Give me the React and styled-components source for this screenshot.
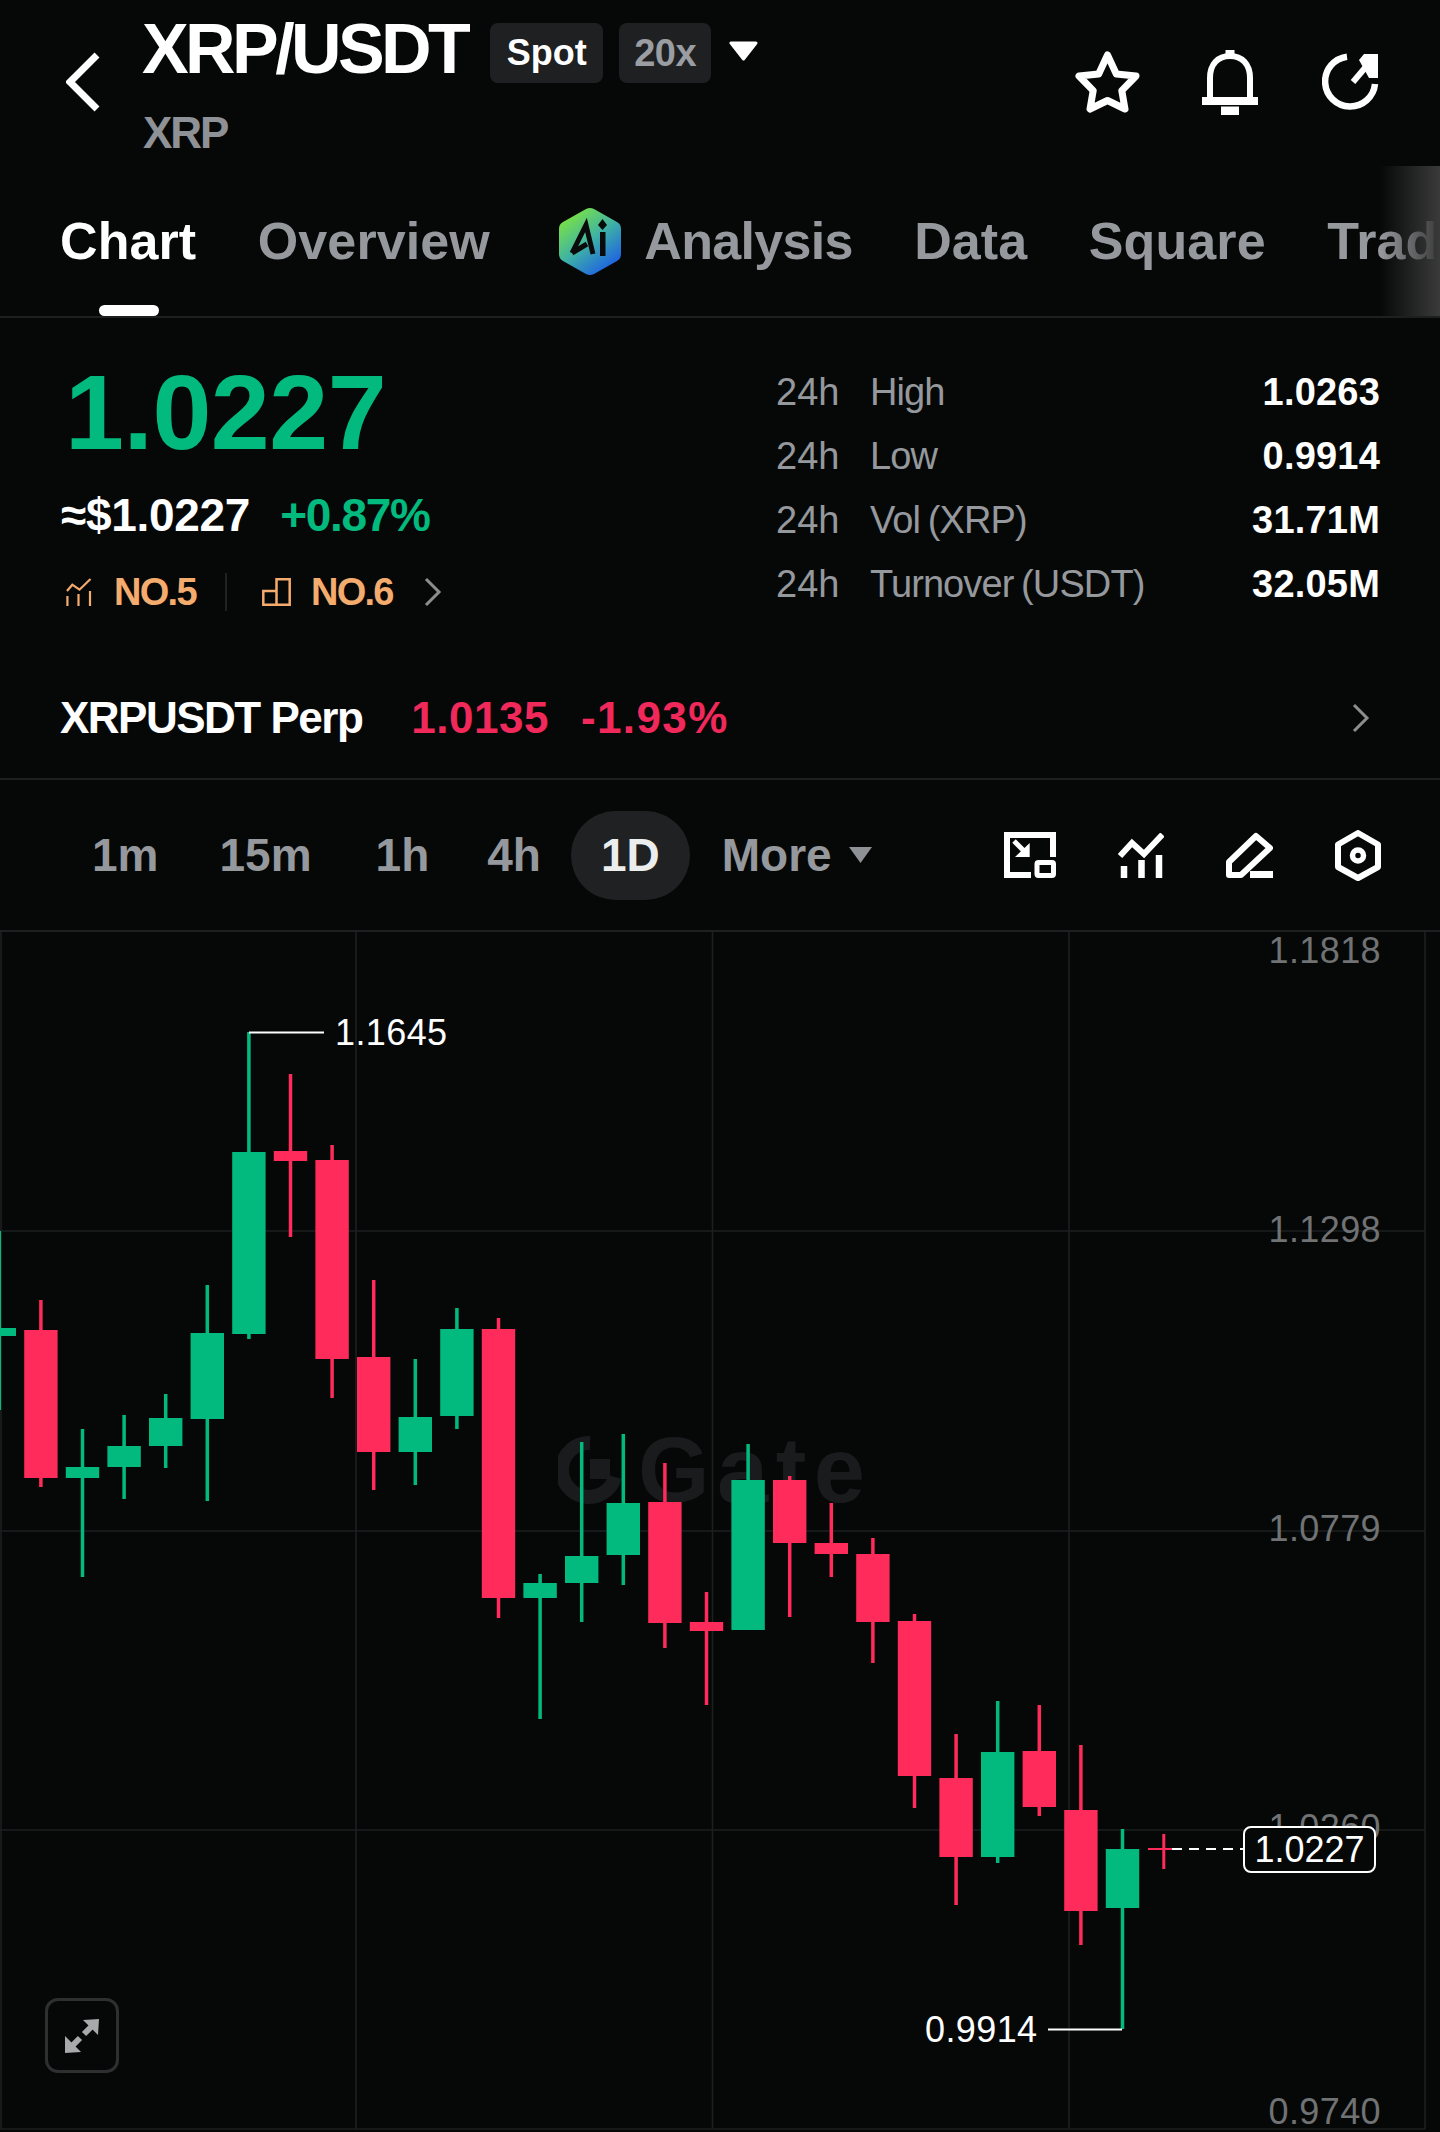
import React from 'react'
import styled, { createGlobalStyle } from 'styled-components'

const GREEN = '#02ba7e'
const RED = '#fe2b5b'
const GREY = '#95989c'
const LINE = '#1d1f20'
const BG = '#060808'

const GlobalStyle = createGlobalStyle`
  html, body {
    margin: 0;
    padding: 0;
    background: ${BG};
  }
  * {
    box-sizing: border-box;
  }
`

const Page = styled.div`
  width: 1440px;
  height: 2132px;
  overflow: hidden;
  background: ${BG};
  color: #fff;
  font-family: "Liberation Sans", Arial, sans-serif;
`

/* header */
const Header = styled.header`
  height: 166px;
  display: flex;
  align-items: flex-start;
  padding: 23px 60px 0 66px;
`

const BackIcon = styled.svg`
  width: 34px;
  height: 60px;
  margin-top: 29px;
  margin-right: 43px;
  flex: none;
`

const TitleBlock = styled.div`
  display: flex;
  flex-direction: column;
`

const TitleRow = styled.div`
  display: flex;
  align-items: flex-start;
  height: 60px;
`

const Title = styled.h1`
  margin: 0 23px 0 -1px;
  font-size: 70px;
  line-height: 52px;
  font-weight: 700;
  letter-spacing: -3.6px;
  white-space: nowrap;
`

const Tag = styled.span`
  height: 60px;
  padding: 0 ${({ $muted }) => ($muted ? '15px' : '16.5px')};
  margin-right: 16px;
  display: flex;
  align-items: center;
  border-radius: 8px;
  background: #1e2021;
  color: ${({ $muted }) => ($muted ? '#9a9da1' : '#fff')};
  font-size: ${({ $muted }) => ($muted ? '38px' : '36px')};
  font-weight: 700;
  letter-spacing: ${({ $muted }) => ($muted ? '-0.5px' : '0')};
`

const TagCaret = styled.svg`
  width: 29px;
  height: 20px;
  margin-top: 18px;
  margin-left: 2px;
`

const Subtitle = styled.div`
  margin-top: 28px;
  font-size: 44px;
  line-height: 44px;
  font-weight: 700;
  letter-spacing: -2px;
  color: #8e9195;
`

const HeaderActions = styled.div`
  margin-left: auto;
  margin-top: 26px;
  height: 66px;
  display: flex;
  align-items: center;
  gap: 62px;
`

const ShareIcon = styled.svg`
  width: 58px;
  height: 58px;
  margin-left: 2px;
`

/* tabs */
const Tabs = styled.nav`
  position: relative;
  height: 152px;
  display: flex;
  align-items: flex-start;
  gap: 61.5px;
  padding: 0 0 0 60px;
  overflow: hidden;
  border-bottom: 2px solid ${LINE};
`

const Tab = styled.div`
  position: relative;
  flex: none;
  height: 150px;
  display: flex;
  align-items: center;
  font-size: 52px;
  font-weight: 700;
  letter-spacing: ${({ $tight }) => ($tight ? '-0.7px' : '0.1px')};
  color: ${({ $active }) => ($active ? '#fff' : GREY)};

  &::after {
    content: ${({ $active }) => ($active ? '""' : 'none')};
    position: absolute;
    left: 39px;
    bottom: 0;
    width: 60px;
    height: 11px;
    border-radius: 6px;
    background: #fff;
  }
`

const AiIcon = styled.svg`
  width: 62px;
  height: 69px;
  margin: 0 23px 0 8px;
`

const TabsFade = styled.div`
  position: absolute;
  top: 0;
  right: 0;
  width: 60px;
  height: 150px;
  background: linear-gradient(90deg, rgba(60, 60, 60, 0), #3a3a3a);
`

/* summary */
const Summary = styled.section`
  height: 340px;
  display: flex;
  padding: 0 60px;
`

const PriceColumn = styled.div`
  flex: 1;
  display: flex;
  flex-direction: column;
`

const BigPrice = styled.div`
  margin-top: 44px;
  margin-left: 5px;
  font-size: 106px;
  line-height: 100px;
  font-weight: 700;
  letter-spacing: -0.5px;
  color: ${GREEN};
`

const SubRow = styled.div`
  margin-top: 28px;
  height: 50px;
  display: flex;
  align-items: center;
  gap: 30px;
  font-size: 46px;
  font-weight: 700;
`

const FiatPrice = styled.span`
  letter-spacing: -0.3px;
  margin-left: 1px;
`

const Change = styled.span`
  letter-spacing: -1.3px;
  color: ${GREEN};
`

const RankRow = styled.div`
  margin-top: 32px;
  height: 40px;
  display: flex;
  align-items: center;
  padding-left: 5px;
`

const RankIcon = styled.svg`
  width: ${({ $w }) => $w}px;
  height: 28px;
  margin-right: ${({ $mr }) => $mr}px;
`

const RankText = styled.span`
  font-size: 38px;
  font-weight: 700;
  letter-spacing: -1.7px;
  color: #f4ab6e;
`

const RankDivider = styled.span`
  width: 2px;
  height: 38px;
  margin: 0 35px 0 29px;
  background: #1f2122;
`

const Chevron = styled.svg`
  width: 18px;
  height: 30px;
  margin-left: ${({ $ml }) => $ml || 0}px;
`

const Stats = styled.div`
  width: 604px;
  padding-top: 42px;
`

const StatRow = styled.div`
  height: 64px;
  display: flex;
  align-items: center;
  font-size: 38px;
`

const StatPeriod = styled.span`
  width: 94px;
  color: ${GREY};
`

const StatLabel = styled.span`
  color: ${GREY};
  letter-spacing: -0.9px;
  word-spacing: -2px;
`

const StatValue = styled.span`
  margin-left: auto;
  font-weight: 700;
  letter-spacing: 0.2px;
`

/* perp row */
const PerpRow = styled.section`
  height: 122px;
  display: flex;
  align-items: center;
  padding: 0 70px 0 60px;
  border-bottom: 2px solid ${LINE};
  font-size: 44px;
  font-weight: 700;
`

const PerpName = styled.span`
  letter-spacing: -1.5px;
  margin-right: 49px;
`

const PerpNumber = styled.span`
  color: #f0295a;
  margin-right: 32px;
  letter-spacing: ${({ $wide }) => ($wide ? '1.4px' : '0.5px')};
`

const PerpArrow = styled.span`
  margin-left: auto;
  display: flex;
`

/* timeframes */
const ToolRow = styled.section`
  height: 152px;
  display: flex;
  align-items: center;
  padding: 0 59px 0 62px;
  border-bottom: 2px solid ${LINE};
`

const Interval = styled.span`
  height: 89px;
  padding: 0 30px;
  display: flex;
  align-items: center;
  border-radius: 45px;
  font-size: 46px;
  font-weight: 700;
  margin-left: ${({ $ml }) => $ml || 0}px;
  margin-right: ${({ $active }) => ($active ? '2px' : '0')};
  background: ${({ $active }) => ($active ? '#1f2122' : 'transparent')};
  color: ${({ $active }) => ($active ? '#eceded' : GREY)};
`

const MoreCaret = styled.svg`
  width: 23px;
  height: 16px;
  margin-left: 17px;
`

const ToolIcons = styled.div`
  margin-left: auto;
  display: flex;
  align-items: center;
  gap: 62px;
`

/* chart */
const ChartArea = styled.section`
  position: relative;
  height: 1200px;
  overflow: hidden;
`

const Watermark = styled.div`
  position: absolute;
  left: 558px;
  top: 503px;
  display: flex;
  align-items: center;
  gap: 16px;
  color: #191b1c;
  font-size: 92px;
  line-height: 70px;
  font-weight: 700;
  letter-spacing: 7.5px;
`

const ChartSvg = styled.svg`
  position: absolute;
  inset: 0;
  display: block;
`

const AxisLabel = styled.span`
  position: absolute;
  right: 59px;
  top: ${({ $y }) => $y - 932 - 18}px;
  line-height: 36px;
  font-size: 36px;
  letter-spacing: 0.4px;
  color: #707274;
`

const ExtremeLabel = styled.span`
  position: absolute;
  left: ${({ $x }) => $x}px;
  top: ${({ $y }) => $y - 932 - 20}px;
  line-height: 40px;
  font-size: 36px;
  letter-spacing: 0.4px;
  color: #fff;
`

const LastPrice = styled.span`
  position: absolute;
  left: 1243px;
  top: ${1826 - 932}px;
  width: 133px;
  height: 47px;
  display: flex;
  align-items: center;
  justify-content: center;
  border: 2px solid #fff;
  border-radius: 8px;
  background: ${BG};
  font-size: 36px;
  color: #fff;
`

const ExpandButton = styled.div`
  position: absolute;
  left: 45px;
  bottom: 59px;
  width: 74px;
  height: 75px;
  display: flex;
  align-items: center;
  justify-content: center;
  border: 3px solid #2d2f31;
  border-radius: 13px;
`

// [wick top, body top, body bottom, wick bottom, up]
const candles = [
  [1231, 1328, 1336, 1410, true],
  [1300, 1330, 1478, 1487, false],
  [1429, 1467, 1478, 1577, true],
  [1415, 1446, 1467, 1499, true],
  [1394, 1418, 1446, 1468, true],
  [1285, 1333, 1419, 1501, true],
  [1032, 1152, 1334, 1339, true],
  [1074, 1151, 1161, 1237, false],
  [1145, 1160, 1359, 1398, false],
  [1280, 1357, 1452, 1490, false],
  [1359, 1417, 1452, 1485, true],
  [1308, 1329, 1416, 1429, true],
  [1318, 1329, 1598, 1618, false],
  [1574, 1583, 1598, 1719, true],
  [1442, 1556, 1583, 1622, true],
  [1434, 1503, 1555, 1585, true],
  [1463, 1502, 1623, 1648, false],
  [1592, 1622, 1631, 1705, false],
  [1444, 1480, 1630, 1630, true],
  [1476, 1480, 1543, 1617, false],
  [1503, 1543, 1554, 1577, false],
  [1538, 1554, 1622, 1663, false],
  [1614, 1621, 1776, 1808, false],
  [1734, 1778, 1857, 1905, false],
  [1701, 1752, 1857, 1863, true],
  [1705, 1751, 1807, 1816, false],
  [1745, 1810, 1911, 1945, false],
  [1829, 1849, 1908, 2029, true],
]

const candleX = (i) => -0.7 + 41.6 * i

const Candle = ({ index, data }) => {
  const [wickTop, bodyTop, bodyBottom, wickBottom, up] = data
  const x = candleX(index)
  const color = up ? GREEN : RED
  return (
    <g fill={color}>
      <rect x={x - 1.75} y={wickTop} width="3.5" height={wickBottom - wickTop} />
      <rect x={x - 16.7} y={bodyTop} width="33.4" height={bodyBottom - bodyTop} />
    </g>
  )
}

const Chart = () => (
  <ChartArea>
    <Watermark>
      <svg width="64" height="70" viewBox="0 0 64 70" fill="none">
        <path d="M32 8 A27 27 0 1 0 57 42" stroke="#191b1c" strokeWidth="14" />
        <rect x="32" y="24" width="20" height="20" fill="#191b1c" />
      </svg>
      <span>Gate</span>
    </Watermark>
    <ChartSvg width="1440" height="1200" viewBox="0 932 1440 1200">
      <g stroke={LINE} strokeWidth="1.6">
        {[1231, 1531, 1830, 2129].map((y) => (
          <line key={y} x1="0" x2="1425" y1={y} y2={y} />
        ))}
        {[1, 356, 712.5, 1069, 1425].map((x) => (
          <line key={x} x1={x} x2={x} y1="932" y2="2129" />
        ))}
      </g>
      {candles.map((c, i) => (
        <Candle key={i} index={i} data={c} />
      ))}
      <rect x="1162.3" y="1834" width="3" height="35" fill={RED} />
      <rect x="1148" y="1848" width="24" height="2" fill={RED} />
      <line x1="1172" x2="1243" y1="1849" y2="1849" stroke="#fff" strokeWidth="2" strokeDasharray="10 7" />
      <path d="M249 1032.5 H324" stroke="#fff" strokeWidth="2" fill="none" />
      <path d="M1048 2029.5 H1122" stroke="#fff" strokeWidth="2" fill="none" />
    </ChartSvg>

    <AxisLabel $y={951}>1.1818</AxisLabel>
    <AxisLabel $y={1230}>1.1298</AxisLabel>
    <AxisLabel $y={1529}>1.0779</AxisLabel>
    <AxisLabel $y={1828}>1.0260</AxisLabel>
    <AxisLabel $y={2112}>0.9740</AxisLabel>

    <ExtremeLabel $x={335} $y={1033}>1.1645</ExtremeLabel>
    <ExtremeLabel $x={925} $y={2030}>0.9914</ExtremeLabel>
    <LastPrice>1.0227</LastPrice>

    <ExpandButton>
      <svg width="36" height="36" viewBox="0 0 36 36" fill="#a8a9aa">
        <polygon points="19,2 35,1 34,17" />
        <polygon points="1,18 1,35 17,34" />
        <path d="M27 9 L20 16 M16 20 L9 27" stroke="#a8a9aa" strokeWidth="6" fill="none" />
      </svg>
    </ExpandButton>
  </ChartArea>
)

const App = () => (
  <Page>
    <GlobalStyle />
    <Header>
      <BackIcon viewBox="0 0 34 60" fill="none">
        <path d="M31 3 L4 30 L31 57" stroke="#fff" strokeWidth="7" />
      </BackIcon>
      <TitleBlock>
        <TitleRow>
          <Title>XRP/USDT</Title>
          <Tag>Spot</Tag>
          <Tag $muted>20x</Tag>
          <TagCaret viewBox="0 0 29 20">
            <path d="M2 2 H27 L14.5 18 Z" fill="#fff" stroke="#fff" strokeWidth="3" strokeLinejoin="round" />
          </TagCaret>
        </TitleRow>
        <Subtitle>XRP</Subtitle>
      </TitleBlock>
      <HeaderActions>
        <svg width="65" height="62" viewBox="0 0 65 62" fill="none">
          <path
            d="M32.5 4 L41.3 22.9 L61 25 L46.8 39.6 L50 58 L32.5 49.5 L15 58 L18.2 39.6 L4 25 L23.7 22.9 Z"
            stroke="#fff"
            strokeWidth="7"
            strokeLinejoin="round"
          />
        </svg>
        <svg width="56" height="65" viewBox="0 0 56 65" fill="none">
          <rect x="23.5" y="0" width="9" height="7" fill="#fff" />
          <path d="M8 50 V28 C8 14 16 6 28 6 C40 6 48 14 48 28 V50" stroke="#fff" strokeWidth="6" />
          <rect x="0" y="47" width="56" height="8" fill="#fff" />
          <rect x="19" y="56.5" width="18" height="8.5" fill="#fff" />
        </svg>
        <ShareIcon viewBox="0 0 58 58" fill="none">
          <path d="M25 3.7 A25 25 0 1 0 53 31" stroke="#fff" strokeWidth="6.5" />
          <path d="M31 29 L48 9" stroke="#fff" strokeWidth="6" />
          <polygon points="37,7 42,1 56,1 56,25 47,25" fill="#fff" />
        </ShareIcon>
      </HeaderActions>
    </Header>

    <Tabs>
      <Tab $active>Chart</Tab>
      <Tab>Overview</Tab>
      <Tab $tight>
        <AiIcon viewBox="0 0 62 69" fill="none">
          <defs>
            <linearGradient id="aiGradient" x1="0.15" y1="0.05" x2="0.8" y2="0.95">
              <stop offset="0" stopColor="#7fe53c" />
              <stop offset="0.5" stopColor="#3fb3a4" />
              <stop offset="1" stopColor="#1c5ee6" />
            </linearGradient>
          </defs>
          <path
            d="M27 2 Q31 0 35 2 L58 15 Q62 17 62 22 L62 47 Q62 52 58 54 L35 67 Q31 69 27 67 L4 54 Q0 52 0 47 L0 22 Q0 17 4 15 Z"
            fill="url(#aiGradient)"
          />
          <path d="M13 46 L27 18 L34 47 M13 46 L28 37" stroke="#0a0c0c" strokeWidth="5" />
          <rect x="41" y="25" width="5.5" height="24" fill="#0a0c0c" />
          <polygon points="43.5,12 48,18 43.5,23 39,18" fill="#0a0c0c" />
        </AiIcon>
        Analysis
      </Tab>
      <Tab>Data</Tab>
      <Tab>Square</Tab>
      <Tab>Trade</Tab>
      <TabsFade />
    </Tabs>

    <Summary>
      <PriceColumn>
        <BigPrice>1.0227</BigPrice>
        <SubRow>
          <FiatPrice>≈$1.0227</FiatPrice>
          <Change>+0.87%</Change>
        </SubRow>
        <RankRow>
          <RankIcon $w={27} $mr={22} viewBox="0 0 27 28" fill="none" stroke="#f4ab6e" strokeWidth="2.2">
            <path d="M2 13 L7.3 6.7 L14.5 11.7 L25.5 1" />
            <path d="M2.4 18 V28 M13.5 16 V28 M25 13 V28" />
          </RankIcon>
          <RankText>NO.5</RankText>
          <RankDivider />
          <RankIcon $w={29} $mr={20} viewBox="0 0 29 28" fill="none" stroke="#f4ab6e" strokeWidth="2.5">
            <path d="M1.3 13 H14.5 V26.7 H1.3 Z M14.5 1.3 H27.7 V26.7 H14.5 Z" />
          </RankIcon>
          <RankText>NO.6</RankText>
          <Chevron $ml={31} viewBox="0 0 18 30" fill="none">
            <path d="M2 2 L15 15 L2 28" stroke="#8d8d8d" strokeWidth="3" />
          </Chevron>
        </RankRow>
      </PriceColumn>
      <Stats>
        <StatRow><StatPeriod>24h</StatPeriod><StatLabel>High</StatLabel><StatValue>1.0263</StatValue></StatRow>
        <StatRow><StatPeriod>24h</StatPeriod><StatLabel>Low</StatLabel><StatValue>0.9914</StatValue></StatRow>
        <StatRow><StatPeriod>24h</StatPeriod><StatLabel>Vol (XRP)</StatLabel><StatValue>31.71M</StatValue></StatRow>
        <StatRow><StatPeriod>24h</StatPeriod><StatLabel>Turnover (USDT)</StatLabel><StatValue>32.05M</StatValue></StatRow>
      </Stats>
    </Summary>

    <PerpRow>
      <PerpName>XRPUSDT Perp</PerpName>
      <PerpNumber>1.0135</PerpNumber>
      <PerpNumber $wide>-1.93%</PerpNumber>
      <PerpArrow>
        <Chevron viewBox="0 0 18 30" fill="none">
          <path d="M2 2 L15 15 L2 28" stroke="#8d8d8d" strokeWidth="3" />
        </Chevron>
      </PerpArrow>
    </PerpRow>

    <ToolRow>
      <Interval>1m</Interval>
      <Interval $ml={1}>15m</Interval>
      <Interval $ml={4}>1h</Interval>
      <Interval $ml={-2}>4h</Interval>
      <Interval $active>1D</Interval>
      <Interval>
        More
        <MoreCaret viewBox="0 0 23 16">
          <polygon points="0,0 23,0 11.5,16" fill="#8e9195" />
        </MoreCaret>
      </Interval>
      <ToolIcons>
        <svg width="52" height="46" viewBox="0 0 52 46" fill="none" stroke="#fff">
          <path d="M27 43 H3 V3 H49 V25" strokeWidth="6" />
          <rect x="33" y="30.5" width="16.5" height="13" rx="1.5" strokeWidth="5" />
          <path d="M10 9 L20 19" strokeWidth="5" />
          <polygon points="25.7,11 25.7,25 11,25" fill="#fff" stroke="none" />
        </svg>
        <svg width="46" height="45" viewBox="0 0 46 45" fill="none" stroke="#fff">
          <path d="M2 23 L14 10 L26 21 L44.5 1.5" strokeWidth="6" />
          <path d="M6 33 V45 M23.5 27 V45 M41 22 V45" strokeWidth="6.5" />
        </svg>
        <svg width="47" height="46" viewBox="0 0 47 46" fill="none" stroke="#fff">
          <path d="M3 43 V30 L30 4 L44 16 L15 43 Z" strokeWidth="6" strokeLinejoin="round" />
          <path d="M24 42.5 H47" strokeWidth="7" />
        </svg>
        <svg width="46" height="51" viewBox="0 0 46 51" fill="none" stroke="#fff">
          <polygon points="23,3 43,14.5 43,37 23,48 3,37 3,14.5" strokeWidth="6" strokeLinejoin="round" />
          <circle cx="23" cy="25.5" r="5.5" strokeWidth="5.5" />
        </svg>
      </ToolIcons>
    </ToolRow>

    <Chart />
  </Page>
)

export default App
